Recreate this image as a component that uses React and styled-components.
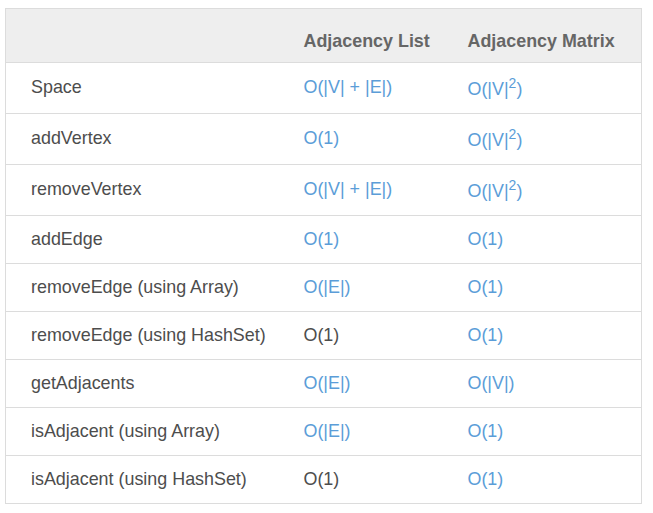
import React from "react";
import styled, { createGlobalStyle } from "styled-components";

const Global = createGlobalStyle`
  html, body { margin: 0; padding: 0; background: #fff; }
  body { font-family: "Liberation Sans", Arial, sans-serif; }
`;

const Wrap = styled.div`
  padding: 8px 12px 0 5px;
`;

const Table = styled.table`
  width: 636px;
  table-layout: fixed;
  border-collapse: collapse;
  border: 1px solid #dcdcdc;
  font-size: 17.9px;
  line-height: 21px;
  color: #4d4d4d;
`;

const Col = styled.col`
  width: ${(p) => p.$w}px;
`;

const Th = styled.th`
  background: #eeeeee;
  color: #666;
  font-weight: bold;
  text-align: left;
  vertical-align: bottom;
  white-space: nowrap;
  padding: 0 8px 10px 25px;
  height: 54px;
  box-sizing: border-box;
  border-bottom: 1px solid #dcdcdc;
`;

const Td = styled.td`
  text-align: left;
  vertical-align: middle;
  white-space: nowrap;
  padding: 13px 8px 13px 25px;
  border-bottom: 1px solid #dcdcdc;
  color: ${(p) => (p.$blue ? "#5b9dd8" : "#4d4d4d")};
`;

const Sup = styled.sup`
  font-size: 0.78em;
  line-height: 1.1;
`;

const sq = (
  <>
    O(|V|<Sup>2</Sup>)
  </>
);

const rows = [
  ["Space", ["O(|V| + |E|)", true], [sq, true]],
  ["addVertex", ["O(1)", true], [sq, true]],
  ["removeVertex", ["O(|V| + |E|)", true], [sq, true]],
  ["addEdge", ["O(1)", true], ["O(1)", true]],
  ["removeEdge (using Array)", ["O(|E|)", true], ["O(1)", true]],
  ["removeEdge (using HashSet)", ["O(1)", false], ["O(1)", true]],
  ["getAdjacents", ["O(|E|)", true], ["O(|V|)", true]],
  ["isAdjacent (using Array)", ["O(|E|)", true], ["O(1)", true]],
  ["isAdjacent (using HashSet)", ["O(1)", false], ["O(1)", true]],
];

export default function App() {
  return (
    <>
      <Global />
      <Wrap>
        <Table>
          <colgroup>
            <Col $w={273} />
            <Col $w={164} />
            <Col $w={199} />
          </colgroup>
          <thead>
            <tr>
              <Th></Th>
              <Th>Adjacency List</Th>
              <Th>Adjacency Matrix</Th>
            </tr>
          </thead>
          <tbody>
            {rows.map((r, i) => (
              <tr key={i}>
                <Td>{r[0]}</Td>
                <Td $blue={r[1][1]}>{r[1][0]}</Td>
                <Td $blue={r[2][1]}>{r[2][0]}</Td>
              </tr>
            ))}
          </tbody>
        </Table>
      </Wrap>
    </>
  );
}
